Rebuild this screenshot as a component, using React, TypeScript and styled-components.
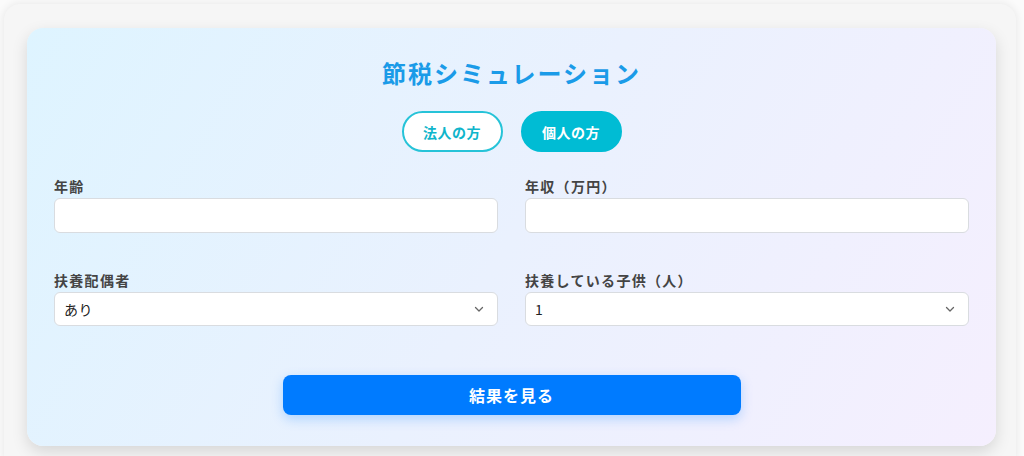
import React, { useState } from "react"
import styled, { createGlobalStyle } from "styled-components"

const GlobalStyle = createGlobalStyle`
  body {
    margin: 0;
    background: #fbfbfb;
    font-family: "Noto Sans CJK JP", "Noto Sans", sans-serif;
  }
`

const chevron =
  "url(\"data:image/svg+xml;utf8,<svg xmlns='http://www.w3.org/2000/svg' width='12' height='12' viewBox='0 0 12 12'><path d='M2.5 4.5 L6 8 L9.5 4.5' fill='none' stroke='%23666' stroke-width='1.3' stroke-linecap='round' stroke-linejoin='round'/></svg>\")"

const SimulatorPage: React.FC = () => {
  const [mode, setMode] = useState<"corp" | "person">("person")
  const [spouse, setSpouse] = useState("あり")
  const [kids, setKids] = useState("1")

  return (
    <Shell>
      <Card>
        <Title>節税シミュレーション</Title>
        <ToggleRow>
          <Toggle $active={mode === "corp"} onClick={() => setMode("corp")}>
            法人の方
          </Toggle>
          <Toggle $active={mode === "person"} onClick={() => setMode("person")}>
            個人の方
          </Toggle>
        </ToggleRow>
        <FormGrid>
          <Field>
            <Label>年齢</Label>
            <TextInput type="number" />
          </Field>
          <Field>
            <Label>年収（万円）</Label>
            <TextInput type="number" />
          </Field>
          <Field>
            <Label>扶養配偶者</Label>
            <Select value={spouse} onChange={(e) => setSpouse(e.target.value)}>
              <option>あり</option>
              <option>なし</option>
            </Select>
          </Field>
          <Field>
            <Label>扶養している子供（人）</Label>
            <Select value={kids} onChange={(e) => setKids(e.target.value)}>
              <option>0</option>
              <option>1</option>
              <option>2</option>
              <option>3</option>
            </Select>
          </Field>
        </FormGrid>
        <SubmitButton>結果を見る</SubmitButton>
      </Card>
    </Shell>
  )
}

const Shell = styled.div`
  box-sizing: border-box;
  width: 1012px;
  min-height: 460px;
  margin: 4px 0 0 4px;
  padding: 24px 20px 24px 23px;
  background: #f6f6f6;
  border-radius: 16px;
  box-shadow: 0 0 10px rgba(0, 0, 0, 0.09);
`

const Card = styled.div`
  box-sizing: border-box;
  width: 969px;
  padding: 29px 27px 31px 27px;
  border-radius: 16px;
  background: linear-gradient(120deg, #def4ff 0%, #eaf1fe 50%, #f5effe 100%);
  box-shadow: 0 6px 16px rgba(0, 0, 0, 0.13);
  display: flex;
  flex-direction: column;
  align-items: center;
`

const Title = styled.h1`
  margin: 0;
  font-size: 24px;
  line-height: 32px;
  font-weight: 700;
  letter-spacing: 2px;
  color: #1a9be8;
`

const ToggleRow = styled.div`
  display: flex;
  gap: 18px;
  margin-top: 22px;
`

const Toggle = styled.button<{ $active: boolean }>`
  box-sizing: border-box;
  width: 101px;
  height: 41px;
  border-radius: 21px;
  border: 2px solid #26c3d8;
  background: ${(p) => (p.$active ? "#00bcd4" : "#ffffff")};
  border-color: ${(p) => (p.$active ? "#00bcd4" : "#26c3d8")};
  color: ${(p) => (p.$active ? "#ffffff" : "#0fb5cb")};
  font-family: inherit;
  font-size: 14px;
  font-weight: 700;
  letter-spacing: 0.5px;
  cursor: pointer;
`

const FormGrid = styled.div`
  align-self: stretch;
  display: grid;
  grid-template-columns: 1fr 1fr;
  column-gap: 27px;
  row-gap: 37px;
  margin-top: 24px;
`

const Field = styled.div`
  display: flex;
  flex-direction: column;
  gap: 2px;
`

const Label = styled.label`
  font-size: 14px;
  line-height: 20px;
  font-weight: 700;
  letter-spacing: 1.3px;
  color: #444;
`

const TextInput = styled.input`
  box-sizing: border-box;
  height: 35px;
  padding: 0 9px;
  border: 1px solid #d9dce0;
  border-radius: 6px;
  background: #fff;
  font-family: inherit;
  font-size: 14px;
  outline: none;
`

const Select = styled.select`
  box-sizing: border-box;
  height: 34px;
  padding: 0 30px 0 9px;
  border: 1px solid #d9dce0;
  border-radius: 6px;
  background: #fff ${chevron} no-repeat right 12px center;
  appearance: none;
  font-family: inherit;
  font-size: 14px;
  letter-spacing: 0.5px;
  color: #222;
  outline: none;
`

const SubmitButton = styled.button`
  width: 458px;
  height: 40px;
  margin-top: 49px;
  border: none;
  border-radius: 8px;
  background: #007bff;
  color: #fff;
  font-family: inherit;
  font-size: 16px;
  font-weight: 700;
  letter-spacing: 1px;
  box-shadow: 0 4px 12px rgba(0, 123, 255, 0.25);
  cursor: pointer;
`

const App = () => {
  return (
    <>
      <GlobalStyle />
      <SimulatorPage />
    </>
  )
}

export default App
